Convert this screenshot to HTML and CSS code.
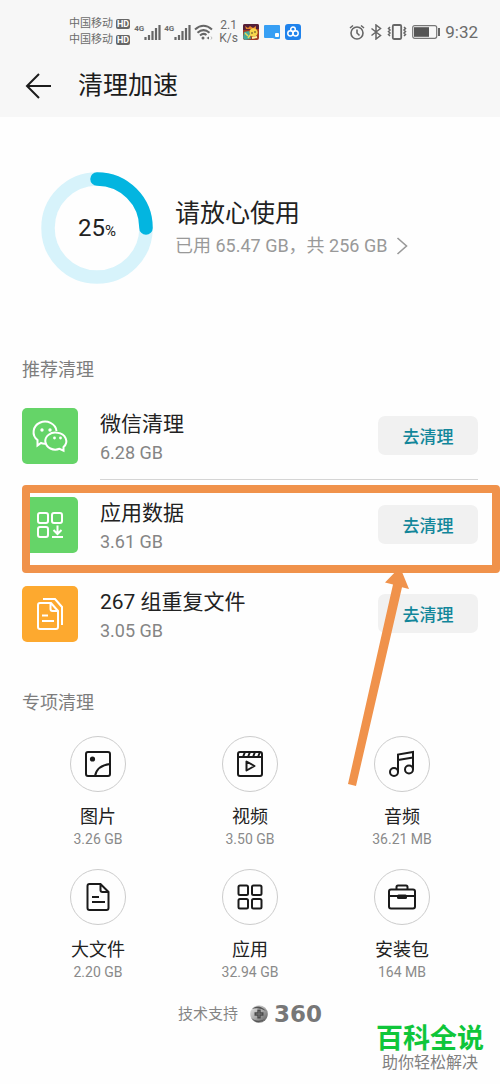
FILE: index.html
```html
<!DOCTYPE html>
<html lang="zh-CN">
<head>
<meta charset="utf-8">
<meta name="viewport" content="width=device-width, initial-scale=1">
<title>清理加速</title>
<link rel="stylesheet" href="styles.css">
</head>
<body>
<header class="top">
  <div class="status">
    <div class="carriers">
      <div class="carrier">中国移动 <span class="hd">HD</span></div>
      <div class="carrier">中国移动 <span class="hd">HD</span></div>
    </div>
    <div class="signals">
      <div class="signal"><span class="net">4G</span><svg width="17" height="16" viewBox="0 0 17 16" stroke="#666" stroke-width="2.2"><path d="M1.500 13v3M5 11v5M8.500 7v9M12 4v12M15.500 1v15"/></svg></div>
      <div class="signal"><span class="net">4G</span><svg width="17" height="16" viewBox="0 0 17 16" stroke="#666" stroke-width="2.2"><path d="M1.500 13v3M5 11v5M8.500 7v9M12 4v12M15.500 1v15"/></svg></div>
      <svg width="19" height="16" viewBox="0 0 19 16" fill="none" stroke="#666" stroke-width="2"><path d="M1 5.500Q9.500-2 18 5.500M3.500 8.800Q9.500 3.500 15.500 8.800M6 11.500Q9.500 8.500 12.500 11"/><circle cx="9" cy="14" r="1.500" fill="#666" stroke="none"/><path d="M15 12.500l-2.500 1.500 2.500 1.500z" fill="#666" stroke="none"/><path d="M17 12.500l1 1.500-1 1.500" stroke="#bbb" stroke-width="1"/></svg>
    </div>
    <div class="rate">2.1<br>K/s</div>
    <div class="apps">
      <svg width="16" height="16" viewBox="0 0 16 16"><rect width="16" height="16" rx="2" fill="#a33a25"/><path d="M0 2q0-2 2-2h12q2 0 2 2v3L0 6z" fill="#542039"/><path d="M2 2l3 2 2-2 3 2 3-2v3H3z" fill="#e5862b"/><circle cx="10.500" cy="8.500" r="4.200" fill="#f7d64b"/><path d="M1 8l5-1 2 8-6 1-2-2z" fill="#45a99b"/><path d="M2 9l3 3M5 14l3-4" stroke="#e8d95a" stroke-width="1.500"/><circle cx="9" cy="9" r=".8" fill="#432"/><circle cx="12" cy="8" r=".8" fill="#432"/><path d="M9 14l5-1" stroke="#fff2a0" stroke-width="2"/></svg>
      <svg width="16" height="16" viewBox="0 0 16 16"><path d="M1 1h14q1 0 1 1v12q0 1-1 1h-4l-2-1H1q-1 0-1-1V2q0-1 1-1z" fill="#379ff4"/><rect x="11" y="9" width="4" height="4" rx="1" fill="#fff"/></svg>
      <svg width="16" height="16" viewBox="0 0 16 16"><rect width="16" height="16" rx="3" fill="#2083ec"/><g fill="none" stroke="#fff" stroke-width="1.500"><circle cx="8" cy="5.300" r="2.300"/><circle cx="5.400" cy="9.300" r="2.600"/><circle cx="10.600" cy="9.300" r="2.600"/></g></svg>
    </div>
    <div class="system">
      <svg width="16" height="16" viewBox="0 0 16 16" fill="none" stroke="#666" stroke-width="1.600"><circle cx="8" cy="9" r="6"/><path d="M8 5.500V9l2.500 2.500M1 4l3-2.500M15 4l-3-2.500"/></svg>
      <svg width="12" height="16" viewBox="0 0 12 16" fill="none" stroke="#666" stroke-width="1.500"><path d="M1.500 4.500l9 7L6 15V1l4.500 3.500-9 7"/></svg>
      <svg width="20" height="16" viewBox="0 0 20 16" fill="none" stroke="#666"><rect x="5.800" y="1" width="8.400" height="14" rx="1.200" stroke-width="1.800"/><path d="M3 3L1.500 4.500 3 6 1.500 7.500 3 9l-1.500 1.500L3 12M17 3l1.500 1.500L17 6l1.500 1.500L17 9l1.500 1.500L17 12" stroke-width="1.500"/></svg>
      <svg width="28" height="14" viewBox="0 0 28 14"><rect x=".7" y=".7" width="24" height="12.600" rx="2" fill="none" stroke="#777" stroke-width="1.200"/><rect x="2" y="2.200" width="15" height="9.600" fill="#555"/><path d="M27 3v8" stroke="#666" stroke-width="2"/></svg>
      <time class="clock">9:32</time>
    </div>
  </div>
  <div class="appbar">
    <button class="back" aria-label="返回"><svg width="28" height="28" viewBox="0 0 28 28" fill="none" stroke="#1c1c1c" stroke-width="2"><path d="M15 2L3 14l12 12M3 14h24"/></svg></button>
    <h1>清理加速</h1>
  </div>
</header>
<main>
  <section class="summary">
    <div class="ring">
      <svg width="112" height="112" viewBox="0 0 112 112" fill="none" stroke-width="13.500"><circle cx="56" cy="56" r="49" stroke="#d7f3fb"/><path d="M56 7A49 49 0 0 1 105 56" stroke="#03b5e0" stroke-linecap="round"/></svg>
      <div class="percent">25<small>%</small></div>
    </div>
    <div>
      <h2 class="verdict">请放心使用</h2>
      <a class="usage" href="#storage">已用 65.47 GB，共 256 GB<svg width="12" height="20" viewBox="0 0 12 20" fill="none" stroke="#999" stroke-width="1.600"><path d="M1.500 2l9 8-9 8"/></svg></a>
    </div>
  </section>
  <section>
    <h2 class="label">推荐清理</h2>
    <ul class="list">
      <li class="row">
        <span class="tile"><svg width="56" height="56" viewBox="0 0 56 56" fill="none" stroke="#fff" stroke-width="2"><path d="M24.500 35.500q-3 .5-5.500-.5l-3.500 2.500v-5.500a11.500 10.500 0 1 1 19-9"/><path d="M35.500 24.800a10 8.500 0 1 0 2 16l4 1.800v-3.500a10 8.500 0 0 0-6-14.300z"/><g fill="#fff" stroke="none"><circle cx="20" cy="22" r="1.700"/><circle cx="28" cy="22" r="1.700"/><circle cx="32.500" cy="30" r="1.400"/><circle cx="38.500" cy="30" r="1.400"/></g></svg></span>
        <div class="info"><div class="name">微信清理</div><div class="size">6.28 GB</div></div>
        <button class="clean">去清理</button>
      </li>
      <li class="row">
        <span class="tile"><svg width="56" height="56" viewBox="0 0 56 56" fill="none" stroke="#fff" stroke-width="2"><rect x="16" y="16" width="10" height="10" rx="2"/><rect x="30" y="16" width="10" height="10" rx="2"/><rect x="16" y="30" width="10" height="10" rx="2"/><path d="M35.500 28.500v8M31.500 33l4 4 4-4M30 40h11"/></svg></span>
        <div class="info"><div class="name">应用数据</div><div class="size">3.61 GB</div></div>
        <button class="clean">去清理</button>
        <span class="highlight"></span>
        <svg class="arrow" width="70" height="224" viewBox="0 0 70 224" fill="#f0924b"><path d="M60 1l9 22-7-1.800L16 220l-8-2L53 18.500l-8-2z"/></svg>
      </li>
      <li class="row">
        <span class="tile amber"><svg width="56" height="56" viewBox="0 0 56 56" fill="none" stroke="#fff" stroke-width="2"><path d="M18 17h11l7 8v16q0 2-2 2H18q-2 0-2-2V19q0-2 2-2zM28.500 17v6q0 2 2 2H36M20 29.500h6M20 35h12"/><path d="M21 13h12l7 8v18"/></svg></span>
        <div class="info"><div class="name">267 组重复文件</div><div class="size">3.05 GB</div></div>
        <button class="clean">去清理</button>
      </li>
    </ul>
  </section>
  <section>
    <h2 class="label">专项清理</h2>
    <div class="grid">
      <a class="item" href="#images"><span class="disc"><svg width="28" height="28" viewBox="0 0 28 28" fill="none" stroke="#1a1a1a" stroke-width="2"><rect x="2" y="2" width="24" height="24" rx="2"/><circle cx="8.500" cy="9" r="2.600" fill="#1a1a1a" stroke="none"/><path d="M11 26q2-10.500 15-12"/></svg></span><span class="title">图片</span><span class="amount">3.26 GB</span></a>
      <a class="item" href="#videos"><span class="disc"><svg width="28" height="28" viewBox="0 0 28 28" fill="none" stroke="#1a1a1a" stroke-width="2"><rect x="2" y="2" width="24" height="24" rx="2"/><path d="M2 7h24M7 7l2-5M12 7l2-5M17 7l2-5M22 7l2-5"/><path d="M10.500 11.500v9l8-4.500z" stroke-linejoin="round"/></svg></span><span class="title">视频</span><span class="amount">3.50 GB</span></a>
      <a class="item" href="#audio"><span class="disc"><svg width="28" height="28" viewBox="0 0 28 28" fill="none" stroke="#1a1a1a" stroke-width="2"><circle cx="6" cy="22" r="4"/><circle cx="21" cy="19.500" r="4"/><path d="M10 22V4.500L25 2v17.500M10 10l15-2.500"/></svg></span><span class="title">音频</span><span class="amount">36.21 MB</span></a>
      <a class="item" href="#large"><span class="disc"><svg width="28" height="28" viewBox="0 0 28 28" fill="none" stroke="#1a1a1a" stroke-width="2"><path d="M5.500 1h11l8 8v16q0 2-2 2h-17q-2 0-2-2V3q0-2 2-2zM16.500 1v6q0 2 2 2h6M8 14h7M8 19h13"/></svg></span><span class="title">大文件</span><span class="amount">2.20 GB</span></a>
      <a class="item" href="#apps"><span class="disc"><svg width="28" height="28" viewBox="0 0 28 28" fill="none" stroke="#1a1a1a" stroke-width="2"><rect x="2.500" y="2.500" width="9.500" height="9.500" rx="1.500"/><rect x="16" y="2.500" width="9.500" height="9.500" rx="1.500"/><rect x="2.500" y="16" width="9.500" height="9.500" rx="1.500"/><rect x="16" y="16" width="9.500" height="9.500" rx="1.500"/></svg></span><span class="title">应用</span><span class="amount">32.94 GB</span></a>
      <a class="item" href="#packages"><span class="disc"><svg width="28" height="28" viewBox="0 0 28 28" fill="none" stroke="#1a1a1a" stroke-width="2"><rect x="1" y="6.500" width="26" height="19" rx="2"/><path d="M8.500 6.500V4q0-1.500 1.500-1.500h8q1.500 0 1.500 1.500v2.500M1 13h26"/><rect x="9" y="11.500" width="10" height="4.500" rx="1.500" fill="#1a1a1a" stroke="none"/></svg></span><span class="title">安装包</span><span class="amount">164 MB</span></a>
    </div>
  </section>
</main>
<footer>
  <div class="support">
    <span>技术支持</span>
    <svg width="18" height="18" viewBox="0 0 18 18"><defs><linearGradient id="metal" x1="0" y1="0" x2="1" y2="1"><stop offset="0" stop-color="#eee"/><stop offset=".5" stop-color="#aaa"/><stop offset="1" stop-color="#555"/></linearGradient></defs><circle cx="9" cy="9" r="8.800" fill="url(#metal)"/><path d="M2 4q7-6 14 2-7-4-14-2zM1 13q7 5 14 1-7 7-14-1z" fill="#555"/><path d="M9 4.500v9M4.500 9h9" stroke="#4b4b4b" stroke-width="3.400"/><path d="M9 6v6M6 9h6" stroke="#777" stroke-width="1"/></svg>
    <strong>360</strong>
  </div>
  <div class="brand"><div class="brandname">百科全说</div><div class="slogan">助你轻松解决</div></div>
</footer>
</body>
</html>
```

FILE: styles.css
```css
* { box-sizing: border-box; }

body {
  margin: 0;
  background: #fefefe;
  color: #222;
  font-family: Roboto, "Noto Sans CJK SC", sans-serif;
}

h1, h2, ul { margin: 0; padding: 0; font-weight: 400; }
a { color: inherit; text-decoration: none; }
button { border: 0; padding: 0; font-family: inherit; cursor: pointer; }
svg { display: block; flex: none; }

/* Status bar and title */
.top { background: #f7f7f7; }

.status {
  display: flex;
  align-items: center;
  padding: 15px 22px 0 69px;
  color: #6b6b6b;
}

.carriers { padding-top: 1px; }

.carrier {
  display: flex;
  align-items: center;
  gap: 3px;
  font-size: 11px;
  line-height: 16px;
  white-space: nowrap;
}

.hd {
  padding: 0 1px;
  border-radius: 2px;
  background: #666;
  color: #fff;
  font-size: 9px;
  font-weight: 700;
  line-height: 10px;
}

.signals { display: flex; align-items: center; gap: 3px; margin-left: 4px; }
.signal { display: flex; }
.net { font-size: 8px; font-weight: 700; line-height: 10px; }
.rate { margin-left: 6px; font-size: 12px; line-height: 13px; text-align: center; }
.apps { display: flex; gap: 5px; margin-left: 5px; }
.system { display: flex; align-items: center; gap: 5px; margin-left: auto; }
.clock { font-size: 17px; line-height: 20px; }

.appbar {
  display: flex;
  align-items: center;
  gap: 26px;
  padding: 20px 24px 14px;
}

.back { background: none; }
h1 { font-size: 25px; line-height: 35px; color: #1c1c1c; }

/* Storage summary */
main { padding: 0 22px; }

.summary {
  display: flex;
  align-items: center;
  gap: 22px;
  padding: 55px 0 74px 19px;
}

.ring { display: grid; place-items: center; }
.ring > * { grid-area: 1 / 1; }
.percent { padding-top: 3px; font-size: 24px; line-height: 32px; }
.percent small { font-size: 15px; }
.verdict { padding-top: 1px; font-size: 25px; line-height: 34px; }

.usage {
  display: flex;
  align-items: center;
  gap: 9px;
  color: #999;
  font-size: 18px;
  line-height: 30px;
  white-space: nowrap;
}

/* Recommended list */
.label { color: #7d7d7d; font-size: 18px; line-height: 24px; }
.list { list-style: none; margin: 9px 0 33px; }

.row {
  position: relative;
  display: flex;
  align-items: center;
  gap: 22px;
}

.tile { border-radius: 5px; background: #65d468; }
.amber { background: #fda92f; }
.info { flex: 1; padding: 18px 0 12px; border-bottom: 1px solid transparent; }
.row:first-child .info { border-color: #d5d5d5; margin-right: -122px; }
.name { font-size: 21px; line-height: 30px; }
.size { color: #858585; font-size: 18px; line-height: 28px; }

.clean {
  width: 100px;
  height: 39px;
  border-radius: 7px;
  background: #f1f1f1;
  color: #12869a;
  font-size: 17px;
  font-weight: 500;
}

.highlight {
  position: absolute;
  inset: 5px -22px -4px 0;
  border: 8px solid #f0924b;
  border-radius: 4px;
  pointer-events: none;
}

.arrow {
  position: absolute;
  z-index: 1;
  top: 86px;
  right: 68px;
  pointer-events: none;
}

/* Category grid */
.grid {
  display: grid;
  grid-template-columns: repeat(3, 1fr);
  row-gap: 21px;
  margin-top: 21px;
}

.item { display: flex; flex-direction: column; align-items: center; }

.disc {
  display: grid;
  place-items: center;
  width: 56px;
  height: 56px;
  margin-bottom: 12px;
  border: 1px solid #ccc;
  border-radius: 50%;
}

.title { font-size: 18px; line-height: 26px; }
.amount { color: #8a8a8a; font-size: 14px; line-height: 18px; }

/* Footer */
.support {
  display: flex;
  align-items: center;
  justify-content: center;
  padding-top: 22px;
  color: #858585;
  font-size: 15px;
  line-height: 22px;
}

.support svg { margin: 0 6px 0 12px; }
.support strong { font-family: "DejaVu Sans", sans-serif; font-size: 23px; color: #777; }

.brand {
  width: fit-content;
  margin-left: auto;
  padding: 0 16px 10px;
  text-align: center;
}

.brandname { color: #0fc63a; font-size: 27px; font-weight: 700; line-height: 28px; }
.slogan { color: #808080; font-size: 16px; line-height: 20px; }
```
